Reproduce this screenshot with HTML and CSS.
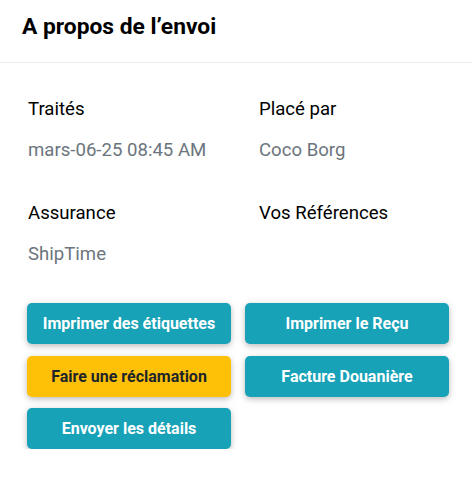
FILE: index.html
```html
<!DOCTYPE html>
<html lang="fr">
<head>
<meta charset="utf-8">
<link rel="stylesheet" href="styles.css">
</head>
<body>
<div class="card">
  <div class="card-header">
    <h2 class="title">A propos de l’envoi</h2>
  </div>
  <div class="card-body">
    <div class="info-grid">
      <div class="info">
        <div class="label">Traités</div>
        <div class="value">mars-06-25 08:45 AM</div>
      </div>
      <div class="info">
        <div class="label">Placé par</div>
        <div class="value">Coco Borg</div>
      </div>
      <div class="info">
        <div class="label">Assurance</div>
        <div class="value">ShipTime</div>
      </div>
      <div class="info">
        <div class="label">Vos Références</div>
        <div class="value"></div>
      </div>
    </div>
    <div class="actions">
      <button class="btn btn-info">Imprimer des étiquettes</button>
      <button class="btn btn-info">Imprimer le Reçu</button>
      <button class="btn btn-warning">Faire une réclamation</button>
      <button class="btn btn-info">Facture Douanière</button>
      <button class="btn btn-info">Envoyer les détails</button>
    </div>
  </div>
</div>
</body>
</html>
```
FILE: styles.css
```css
* { box-sizing: border-box; }
html, body {
  margin: 0;
  padding: 0;
  background: #fff;
  font-family: Roboto, "Liberation Sans", sans-serif;
  color: #000;
}
.card {
  width: 472px;
  background: #fff;
}
.card-header {
  height: 63px;
  border-bottom: 1px solid #ebebeb;
  padding: 13px 22px 0;
}
.title {
  margin: 0;
  font-size: 22.8px;
  line-height: 27px;
  font-weight: 700;
}
.card-body {
  padding: 33px 23px 0 28px;
}
.info-grid {
  display: grid;
  grid-template-columns: 231px 1fr;
  row-gap: 36px;
}
.label {
  font-size: 18.6px;
  line-height: 27px;
  height: 27px;
}
.value {
  margin-top: 14px;
  font-size: 18.6px;
  line-height: 27px;
  height: 27px;
  color: #6c757d;
}
.actions {
  margin-top: 35px;
  margin-left: -1px;
  display: grid;
  grid-template-columns: 204px 204px;
  column-gap: 14px;
  row-gap: 11.5px;
}
.btn {
  height: 41px;
  border: none;
  border-radius: 5px;
  font-family: Roboto, "Liberation Sans", sans-serif;
  font-size: 16px;
  font-weight: 700;
  color: #fff;
  padding: 0 8px;
  box-shadow: 0 2px 5px 0 rgba(0,0,0,.16), 0 2px 10px 0 rgba(0,0,0,.12);
  cursor: pointer;
}
.btn-info { background: #17a2b8; }
.btn-warning { background: #ffc107; color: #212529; }
```
